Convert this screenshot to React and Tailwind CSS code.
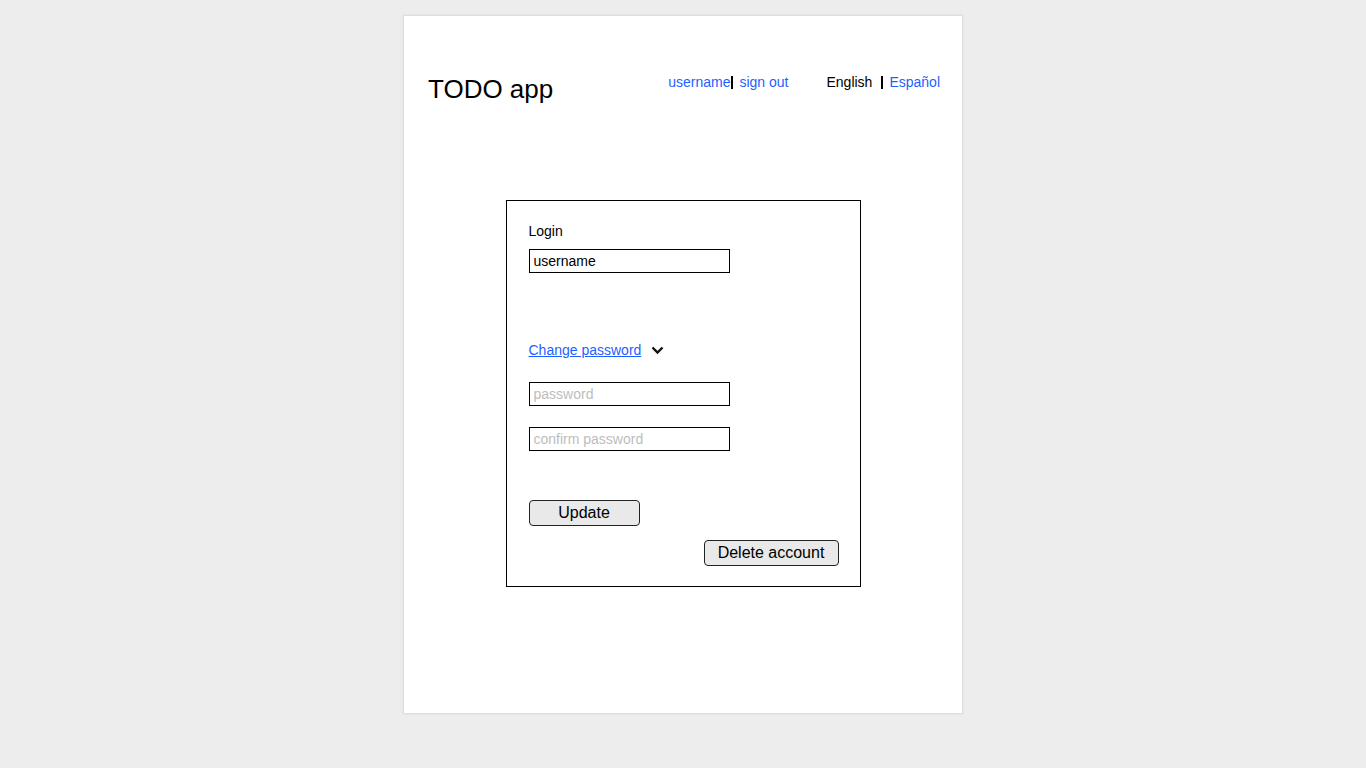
import React from "react";

function Bar() {
  return <span className="inline-block w-[2px] h-[13px] bg-black" />;
}

export default function App() {
  const font = { fontFamily: '"Liberation Sans", Arial, sans-serif' };
  return (
    <div
      className="w-[1366px] min-h-[789px] bg-[#ededed] pt-[15px] text-black"
      style={font}
    >
      <div className="w-[560px] h-[699px] mx-auto bg-white border border-[#dedede] shadow-[0_0_2px_rgba(0,0,0,0.08)] pt-[58px]">
        <div className="flex items-start h-[30px] pl-[24px] pr-[22px]">
          <h1 className="mt-[1px] text-[26px] leading-[29px] font-normal">TODO app</h1>
          <div className="ml-auto flex items-center h-[16px] text-[14px] leading-[16px]">
            <a href="#" className="text-[#1f5fff]">username</a>
            <span className="ml-[1px] flex items-center"><Bar /></span>
            <a href="#" className="ml-[6px] text-[#1f5fff]">sign out</a>
            <span className="ml-[38px]">English</span>
            <span className="ml-[9px] flex items-center"><Bar /></span>
            <a href="#" className="ml-[6px] text-[#1f5fff]">Español</a>
          </div>
        </div>

        <div className="mt-[96px] mx-auto w-[355px] h-[387px] border border-black pt-[22px] pl-[22px] pr-[21px] flex flex-col text-[14px]">
          <div className="leading-[16px]">Login</div>
          <input
            className="mt-[10px] w-[201px] h-[24px] border border-black px-[4px] text-[14px] outline-none"
            defaultValue="username"
          />
          <div className="mt-[69px] flex items-center h-[16px] leading-[16px]">
            <a href="#" className="text-[#1f5fff] underline">Change password</a>
            <svg
              className="ml-[10px]"
              width="13"
              height="10"
              viewBox="0 0 13 10"
              fill="none"
              stroke="#111"
              strokeWidth="2.4"
              strokeLinecap="butt"
              strokeLinejoin="miter"
            >
              <polyline points="1.5,2.5 6.5,7.5 11.5,2.5" />
            </svg>
          </div>
          <input
            className="mt-[24px] w-[201px] h-[24px] border border-black px-[4px] text-[14px] outline-none placeholder:text-[#bdbdbd]"
            placeholder="password"
            type="password"
          />
          <input
            className="mt-[21px] w-[201px] h-[24px] border border-black px-[4px] text-[14px] outline-none placeholder:text-[#bdbdbd]"
            placeholder="confirm password"
            type="password"
          />
          <button className="mt-[49px] w-[111px] h-[26px] border border-[#222] rounded-[4px] bg-[#e9e9e9] text-[16px] leading-[18px]">
            Update
          </button>
          <button className="mt-[14px] self-end w-[135px] h-[26px] border border-[#222] rounded-[4px] bg-[#e9e9e9] text-[16px] leading-[18px]">
            Delete account
          </button>
        </div>
      </div>
    </div>
  );
}
